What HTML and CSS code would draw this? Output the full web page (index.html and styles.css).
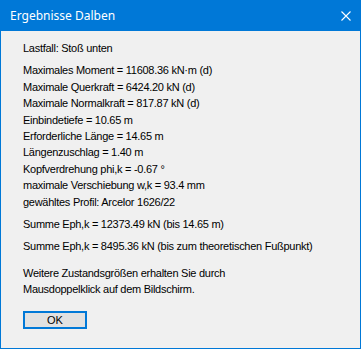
FILE: index.html
```html
<!DOCTYPE html>
<html lang="de">
<head>
  <meta charset="UTF-8">
  <title>Ergebnisse Dalben</title>
  <link rel="stylesheet" href="styles.css">
</head>
<body>

  <div class="dialog">
    <div class="titlebar">
      <span class="title">Ergebnisse Dalben</span>
      <svg class="close" width="10" height="10" viewBox="0 0 10 10">
        <path d="M0.5 0.5 L9.5 9.5 M9.5 0.5 L0.5 9.5" stroke="#fff" stroke-width="1.1" fill="none"/>
      </svg>
    </div>

    <div class="content">
      <div class="line case">Lastfall: Stoß unten</div>

      <div class="group">
        <div class="line">Maximales Moment = 11608.36 kN·m (d)</div>
        <div class="line">Maximale Querkraft = 6424.20 kN (d)</div>
        <div class="line">Maximale Normalkraft = 817.87 kN (d)</div>
        <div class="line">Einbindetiefe = 10.65 m</div>
        <div class="line">Erforderliche Länge = 14.65 m</div>
        <div class="line">Längenzuschlag = 1.40 m</div>
        <div class="line">Kopfverdrehung phi,k = -0.67 °</div>
        <div class="line">maximale Verschiebung w,k = 93.4 mm</div>
        <div class="line">gewähltes Profil: Arcelor 1626/22</div>
      </div>

      <div class="line sum">Summe Eph,k = 12373.49 kN (bis 14.65 m)</div>
      <div class="line sum last">Summe Eph,k = 8495.36 kN (bis zum theoretischen Fußpunkt)</div>

      <div class="hint">
        <div class="line">Weitere Zustandsgrößen erhalten Sie durch</div>
        <div class="line">Mausdoppelklick auf dem Bildschirm.</div>
      </div>

      <button class="ok">OK</button>
    </div>
  </div>

</body>
</html>
```

FILE: styles.css
```css
body {
  margin: 0;
  background: #f0f0f0;
}
.dialog {
  width: 361px;
  height: 349px;
  box-sizing: border-box;
  border: 1px solid #0078d7;
  background: #f0f0f0;
  display: flex;
  flex-direction: column;
}
.titlebar {
  height: 30px;
  background: #0078d7;
  display: flex;
  align-items: center;
  justify-content: space-between;
  padding: 0 9px 0 9px;
}
.title {
  font-family: "Noto Sans", "Open Sans", sans-serif;
  font-size: 12px;
  color: #fff;
  margin-top: -1px;
}
.close {
  display: block;
}
.content {
  padding: 9px 0 0 22px;
  font-family: "Liberation Sans", Arial, sans-serif;
  font-size: 11px;
  letter-spacing: -0.27px;
  color: #000;
}
.line {
  line-height: 16.4px;
  white-space: nowrap;
}
.case {
  margin-bottom: 6px;
}
.group {
  margin-bottom: 5.6px;
}
.sum {
  margin-bottom: 5.6px;
}
.sum.last {
  margin-bottom: 10.6px;
}
.hint {
  margin-bottom: 13.6px;
}
.ok {
  width: 64px;
  height: 18px;
  box-sizing: border-box;
  border: 2px solid #0078d7;
  background: #e1e1e1;
  font-family: "Liberation Sans", Arial, sans-serif;
  font-size: 11px;
  color: #000;
  padding: 0;
  display: block;
}
```
